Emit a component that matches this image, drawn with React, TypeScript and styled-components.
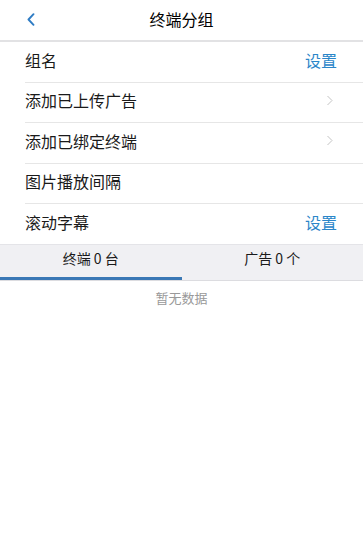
import React, { useState } from "react";
import styled, { createGlobalStyle } from "styled-components";

const GlobalStyle = createGlobalStyle`
	html, body {
		margin: 0;
		padding: 0;
		background: #ffffff;
	}
	body {
		font-family: "Noto Sans CJK SC", "Liberation Sans", sans-serif;
		color: #222;
	}
`;

const Page = styled.div`
	width: 363px;
	min-height: 555px;
	background: #fff;
	display: flex;
	flex-direction: column;
`;

const Header = styled.header`
	height: 40px;
	display: grid;
	grid-template-columns: 60px 1fr 60px;
	align-items: center;
	border-bottom: 2px solid #e2e2e4;
`;

const BackButton = styled.button`
	border: none;
	background: none;
	padding: 0 0 2px 27px;
	display: flex;
	align-items: center;
	height: 100%;
	color: #2f7cc4;
`;

const Title = styled.h1`
	margin: 0 0 2px;
	text-align: center;
	font-size: 16px;
	font-weight: 400;
	color: #000;
`;

const List = styled.ul`
	list-style: none;
	margin: 0;
	padding: 0 0 0 25px;
`;

const Row = styled.li<{ $last?: boolean }>`
	box-sizing: border-box;
	height: ${(p) => (p.$last ? "39.5px" : "40.5px")};
	padding-bottom: 4px;
	display: flex;
	align-items: center;
	justify-content: space-between;
	border-bottom: ${(p) => (p.$last ? "none" : "1px solid #e6e6e6")};
	font-size: 16px;
	line-height: 20px;
	color: #1a1a1a;
`;

const Action = styled.span`
	color: #2b86c9;
	font-size: 16px;
	padding-right: 26px;
`;

const Arrow = styled.span`
	display: flex;
	padding-right: 30px;
	color: #c4c4c4;
`;

const Tabs = styled.div`
	display: grid;
	grid-template-columns: 1fr 1fr;
	height: 35px;
	background: #f0f0f3;
	border-top: 1px solid #e4e4e8;
	border-bottom: 1px solid #dcdce0;
`;

const Tab = styled.button<{ $active?: boolean }>`
	border: none;
	background: none;
	font-family: inherit;
	font-size: 14px;
	line-height: 18px;
	color: #1a1a1a;
	padding: 0 0 8px;
	box-shadow: ${(p) => (p.$active ? "inset 0 -3px 0 #3a78b5" : "none")};
`;

const Empty = styled.p`
	margin: 7px 0 0;
	text-align: center;
	font-size: 13px;
	color: #999;
`;

const BackChevron = () => (
	<svg width="8" height="13" viewBox="0 0 8 13" fill="none">
		<path d="M6.5 1.2 L1.5 6.5 L6.5 11.8" stroke="currentColor" strokeWidth="1.9" strokeLinecap="round" strokeLinejoin="round" />
	</svg>
);

const RightChevron = () => (
	<svg width="7" height="11" viewBox="0 0 7 11" fill="none">
		<path d="M1.5 1 L6 5.5 L1.5 10" stroke="currentColor" strokeWidth="1" />
	</svg>
);

const App = () => {
	const [tab, setTab] = useState(0);

	return (
		<Page>
			<GlobalStyle />
			<Header>
				<BackButton>
					<BackChevron />
				</BackButton>
				<Title>终端分组</Title>
				<span />
			</Header>
			<List>
				<Row>
					组名
					<Action>设置</Action>
				</Row>
				<Row>
					添加已上传广告
					<Arrow>
						<RightChevron />
					</Arrow>
				</Row>
				<Row>
					添加已绑定终端
					<Arrow>
						<RightChevron />
					</Arrow>
				</Row>
				<Row>图片播放间隔</Row>
				<Row $last>
					滚动字幕
					<Action>设置</Action>
				</Row>
			</List>
			<Tabs>
				<Tab $active={tab === 0} onClick={() => setTab(0)}>终端 0 台</Tab>
				<Tab $active={tab === 1} onClick={() => setTab(1)}>广告 0 个</Tab>
			</Tabs>
			<Empty>暂无数据</Empty>
		</Page>
	);
};

export default App;
